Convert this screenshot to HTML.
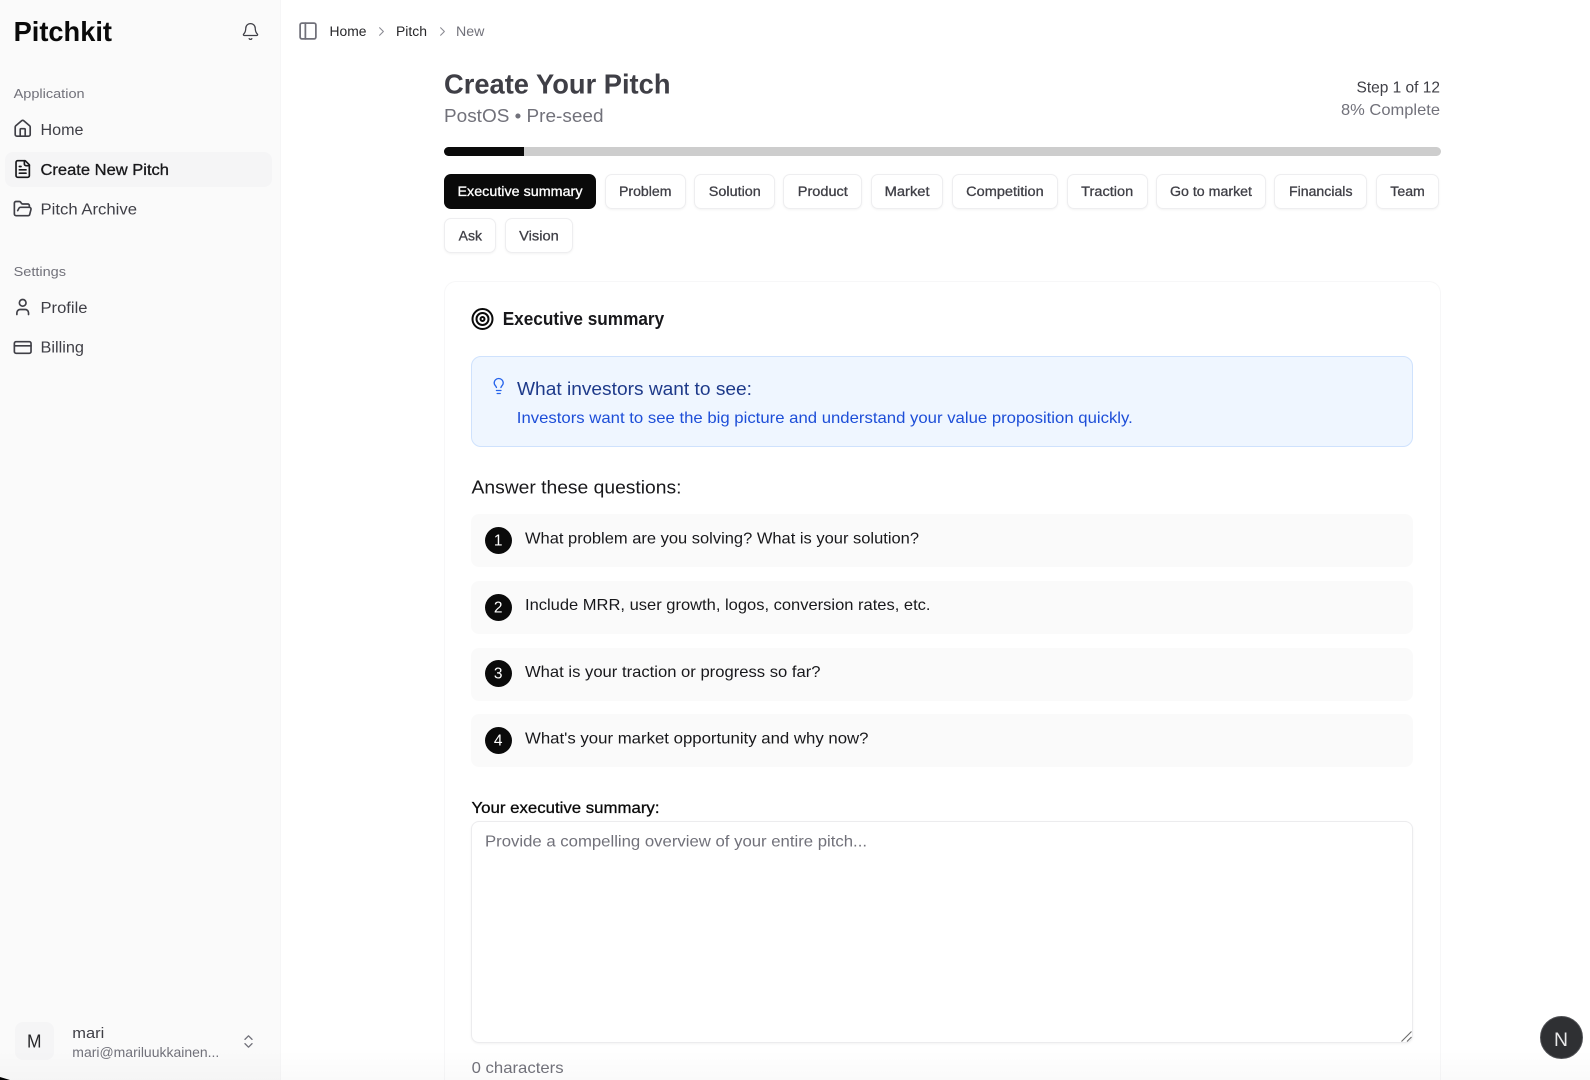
<!DOCTYPE html>
<html lang="en">
<head>
<meta charset="utf-8">
<title>Pitchkit</title>
<style>
html,body{margin:0;padding:0;background:#fff;width:1590px;height:1080px;overflow:hidden}
#page{width:1590px;height:1080px;overflow:hidden;position:relative;font-family:"Liberation Sans",sans-serif}
.b{position:absolute;box-sizing:border-box}
.tab{background:#fff;border:1px solid #eeeef0;border-radius:7px;box-shadow:0 1px 2px rgba(0,0,0,.05);top:174px;height:35px}
.q{background:#fafafa;border-radius:8px;left:471px;width:942px;height:53px}
.c{background:#0a0a0a;border-radius:50%;left:485px;width:27px;height:27px}
svg.o{position:absolute;left:0;top:0;display:block}
svg text{font-family:"Liberation Sans",sans-serif}
.m{stroke-width:.3px;paint-order:stroke}
.i{fill:none;stroke-linecap:round;stroke-linejoin:round;stroke-width:2}
</style>
</head>
<body>
<div id="page">
<div class="b" style="left:0;top:0;width:281px;height:1080px;background:#fafafa;border-right:1px solid #f6f6f7"></div>
<div class="b" style="left:5px;top:152px;width:267px;height:35px;background:#f5f5f6;border-radius:8px"></div>
<div class="b" style="left:15px;top:1022px;width:39px;height:38px;background:#f5f5f6;border-radius:8px"></div>

<div class="b" style="left:444px;top:147px;width:997px;height:9px;background:#cdcdcd;border-radius:5px"></div>
<div class="b" style="left:444px;top:147px;width:80px;height:9px;background:#0a0a0a;border-radius:5px 0 0 5px"></div>

<div class="b" style="left:444px;top:174px;width:151.5px;height:35px;background:#0a0a0a;border-radius:7px"></div>
<div class="b tab" style="left:605px;width:80.5px"></div>
<div class="b tab" style="left:694.3px;width:80.5px"></div>
<div class="b tab" style="left:783px;width:78.5px"></div>
<div class="b tab" style="left:871px;width:72px"></div>
<div class="b tab" style="left:952px;width:105.5px"></div>
<div class="b tab" style="left:1067px;width:80.5px"></div>
<div class="b tab" style="left:1156px;width:110px"></div>
<div class="b tab" style="left:1274px;width:92.5px"></div>
<div class="b tab" style="left:1376px;width:63px"></div>
<div class="b tab" style="left:444px;top:218px;width:52px"></div>
<div class="b tab" style="left:505px;top:218px;width:68px"></div>

<div class="b" style="left:444px;top:281px;width:996.5px;height:799px;background:#fff;border:1px solid #f7f7f8;border-bottom:0;border-radius:12px 12px 0 0"></div>
<div class="b" style="left:471px;top:356px;width:942px;height:91px;background:#eff6ff;border:1px solid #cfe2fd;border-radius:10px"></div>
<div class="b q" style="top:514px"></div>
<div class="b q" style="top:581px"></div>
<div class="b q" style="top:647.5px"></div>
<div class="b q" style="top:714px"></div>
<div class="b c" style="top:527px"></div>
<div class="b c" style="top:594px"></div>
<div class="b c" style="top:660px"></div>
<div class="b c" style="top:727px"></div>
<div class="b" style="left:471px;top:821px;width:942px;height:222px;background:#fff;border:1px solid #ececee;border-radius:8px;box-shadow:0 1px 2px rgba(0,0,0,.05)"></div>

<div class="b" style="left:0;top:1050px;width:1590px;height:30px;background:linear-gradient(to bottom,rgba(0,0,0,0),rgba(0,0,0,.02))"></div>
<div class="b" style="left:0;top:1077px;width:10px;height:3px;background:#000;clip-path:polygon(0 0,100% 100%,0 100%)"></div>
<div class="b" style="left:1540px;top:1016px;width:43px;height:43px;background:#2f3033;border:1.5px solid #4f5054;border-radius:50%"></div>

<svg class="o" width="1590" height="1080" viewBox="0 0 1590 1080" xmlns="http://www.w3.org/2000/svg">
<!-- sidebar text -->
<text x="13.6" y="41" font-size="28" font-weight="700" fill="#0a0a0a" textLength="98.4" lengthAdjust="spacingAndGlyphs">Pitchkit</text>
<text x="13.6" y="98" font-size="13" fill="#71717a" textLength="71" lengthAdjust="spacingAndGlyphs">Application</text>
<text x="40.5" y="135" font-size="15.5" fill="#3f3f46" textLength="43" lengthAdjust="spacingAndGlyphs">Home</text>
<text x="40.5" y="175" font-size="15.5" fill="#18181b" stroke="#18181b" class="m" textLength="128.5" lengthAdjust="spacingAndGlyphs">Create New Pitch</text>
<text x="40.5" y="214.7" font-size="15.5" fill="#3f3f46" textLength="96.5" lengthAdjust="spacingAndGlyphs">Pitch Archive</text>
<text x="13.6" y="276" font-size="13" fill="#71717a" textLength="52.4" lengthAdjust="spacingAndGlyphs">Settings</text>
<text x="40.5" y="313" font-size="15.5" fill="#3f3f46" textLength="47" lengthAdjust="spacingAndGlyphs">Profile</text>
<text x="40.5" y="352.7" font-size="15.5" fill="#3f3f46" textLength="43.5" lengthAdjust="spacingAndGlyphs">Billing</text>
<text x="27" y="1047.5" font-size="18" fill="#27272a" textLength="14.5" lengthAdjust="spacingAndGlyphs">M</text>
<text x="72.3" y="1038" font-size="15" fill="#3f3f46" textLength="32" lengthAdjust="spacingAndGlyphs">mari</text>
<text x="72.3" y="1057" font-size="14" fill="#71717a" textLength="147" lengthAdjust="spacingAndGlyphs">mari@mariluukkainen...</text>

<!-- sidebar icons -->
<g class="i" stroke="#3f3f46">
<svg x="12.7" y="118.7" width="20" height="20" viewBox="0 0 24 24"><path d="M15 21v-8a1 1 0 0 0-1-1h-4a1 1 0 0 0-1 1v8"/><path d="M3 10a2 2 0 0 1 .709-1.528l7-5.999a2 2 0 0 1 2.582 0l7 5.999A2 2 0 0 1 21 10v9a2 2 0 0 1-2 2H5a2 2 0 0 1-2-2z"/></svg>
<svg x="12.7" y="159" width="20" height="20" viewBox="0 0 24 24" stroke="#18181b"><path d="M15 2H6a2 2 0 0 0-2 2v16a2 2 0 0 0 2 2h12a2 2 0 0 0 2-2V7Z"/><path d="M14 2v4a2 2 0 0 0 2 2h4"/><path d="M10 9H8"/><path d="M16 13H8"/><path d="M16 17H8"/></svg>
<svg x="12.7" y="199" width="20" height="20" viewBox="0 0 24 24"><path d="m6 14 1.5-2.9A2 2 0 0 1 9.24 10H20a2 2 0 0 1 1.94 2.5l-1.54 6a2 2 0 0 1-1.95 1.5H4a2 2 0 0 1-2-2V5a2 2 0 0 1 2-2h3.9a2 2 0 0 1 1.69.9l.81 1.2a2 2 0 0 0 1.67.9H18a2 2 0 0 1 2 2v2"/></svg>
<svg x="12.7" y="297" width="20" height="20" viewBox="0 0 24 24"><path d="M19 21v-2a4 4 0 0 0-4-4H9a4 4 0 0 0-4 4v2"/><circle cx="12" cy="7" r="4"/></svg>
<svg x="12.7" y="337.5" width="20" height="20" viewBox="0 0 24 24"><rect x="2" y="5" width="20" height="14" rx="2"/><path d="M2 10h20"/></svg>
<svg x="241" y="22" width="19" height="19" viewBox="0 0 24 24" stroke="#3f3f46" style="stroke-width:1.6"><path d="M10.268 21a2 2 0 0 0 3.464 0"/><path d="M3.262 15.326A1 1 0 0 0 4 17h16a1 1 0 0 0 .74-1.673C19.41 13.956 18 12.499 18 8A6 6 0 0 0 6 8c0 4.499-1.411 5.956-2.738 7.326"/></svg>
<svg x="240" y="1033" width="17" height="17" viewBox="0 0 24 24" stroke="#71717a" style="stroke-width:1.8"><path d="m7 15 5 5 5-5"/><path d="m7 9 5-5 5 5"/></svg>
</g>

<!-- breadcrumb -->
<g class="i">
<svg x="297.5" y="20.5" width="21" height="21" viewBox="0 0 24 24" stroke="#71717a"><rect x="3" y="3" width="18" height="18" rx="2"/><path d="M9 3v18"/></svg>
<svg x="374" y="24" width="15" height="15" viewBox="0 0 24 24" stroke="#8a8a92" style="stroke-width:1.7"><path d="m9 18 6-6-6-6"/></svg>
<svg x="435" y="24" width="15" height="15" viewBox="0 0 24 24" stroke="#8a8a92" style="stroke-width:1.7"><path d="m9 18 6-6-6-6"/></svg>
</g>
<text x="329.5" y="36" font-size="13.5" fill="#27272a" textLength="37" lengthAdjust="spacingAndGlyphs">Home</text>
<text x="396" y="36" font-size="13.5" fill="#27272a" textLength="31" lengthAdjust="spacingAndGlyphs">Pitch</text>
<text x="456" y="36" font-size="13.5" fill="#71717a" textLength="28.4" lengthAdjust="spacingAndGlyphs">New</text>

<!-- header -->
<text x="444" y="93.5" font-size="28" font-weight="700" fill="#3f3f46" textLength="226.5" lengthAdjust="spacingAndGlyphs">Create Your Pitch</text>
<text x="444" y="122" font-size="18" fill="#71717a" textLength="159.5" lengthAdjust="spacingAndGlyphs">PostOS • Pre-seed</text>
<text x="1356.5" y="92.5" font-size="16" fill="#3f3f46" textLength="83.5" lengthAdjust="spacingAndGlyphs">Step 1 of 12</text>
<text x="1341" y="115" font-size="16" fill="#71717a" textLength="99" lengthAdjust="spacingAndGlyphs">8% Complete</text>

<!-- tabs -->
<g font-size="13.5" fill="#3f3f46" stroke="#3f3f46" class="m">
<text x="457.5" y="196" fill="#fff" stroke="#fff" textLength="125" lengthAdjust="spacingAndGlyphs">Executive summary</text>
<text x="619" y="196" textLength="52.5" lengthAdjust="spacingAndGlyphs">Problem</text>
<text x="708.8" y="196" textLength="52" lengthAdjust="spacingAndGlyphs">Solution</text>
<text x="797.8" y="196" textLength="50" lengthAdjust="spacingAndGlyphs">Product</text>
<text x="884.6" y="196" textLength="45" lengthAdjust="spacingAndGlyphs">Market</text>
<text x="966.2" y="196" textLength="77.5" lengthAdjust="spacingAndGlyphs">Competition</text>
<text x="1081.2" y="196" textLength="52" lengthAdjust="spacingAndGlyphs">Traction</text>
<text x="1170" y="196" textLength="82" lengthAdjust="spacingAndGlyphs">Go to market</text>
<text x="1289" y="196" textLength="63.5" lengthAdjust="spacingAndGlyphs">Financials</text>
<text x="1390.3" y="196" textLength="34.5" lengthAdjust="spacingAndGlyphs">Team</text>
<text x="458.7" y="240.5" textLength="23.3" lengthAdjust="spacingAndGlyphs">Ask</text>
<text x="519.2" y="240.5" textLength="39.6" lengthAdjust="spacingAndGlyphs">Vision</text>
</g>

<!-- card title -->
<svg x="470.5" y="307" width="24" height="24" viewBox="0 0 24 24" class="i" stroke="#0a0a0a"><circle cx="12" cy="12" r="10"/><circle cx="12" cy="12" r="6"/><circle cx="12" cy="12" r="2"/></svg>
<text x="502.7" y="325" font-size="18" font-weight="700" fill="#18181b" textLength="161.5" lengthAdjust="spacingAndGlyphs">Executive summary</text>

<!-- investors -->
<svg x="489.7" y="377" width="18" height="18" viewBox="0 0 24 24" class="i" stroke="#2563eb" style="stroke-width:1.8"><path d="M15 14c.2-1 .7-1.7 1.5-2.5 1-.9 1.5-2.2 1.5-3.5A6 6 0 0 0 6 8c0 1 .2 2.2 1.5 3.5.7.7 1.3 1.5 1.5 2.5"/><path d="M9 18h6"/><path d="M10 22h4"/></svg>
<text x="517" y="395" font-size="18" fill="#1e3a8a" class="m" textLength="235" lengthAdjust="spacingAndGlyphs">What investors want to see:</text>
<text x="516.8" y="423" font-size="16" fill="#1d4ed8" textLength="616" lengthAdjust="spacingAndGlyphs">Investors want to see the big picture and understand your value proposition quickly.</text>

<!-- questions -->
<text x="471.5" y="493.3" font-size="18" fill="#18181b" class="m" textLength="210" lengthAdjust="spacingAndGlyphs">Answer these questions:</text>
<g font-size="15.5" fill="#fff" text-anchor="middle">
<text x="498.2" y="545.5">1</text>
<text x="498.2" y="612.5">2</text>
<text x="498.2" y="678.5">3</text>
<text x="498.2" y="745.5">4</text>
</g>
<g font-size="16" fill="#18181b">
<text x="525" y="543.3" textLength="394" lengthAdjust="spacingAndGlyphs">What problem are you solving? What is your solution?</text>
<text x="525" y="610" textLength="405.5" lengthAdjust="spacingAndGlyphs">Include MRR, user growth, logos, conversion rates, etc.</text>
<text x="525" y="677" textLength="295.5" lengthAdjust="spacingAndGlyphs">What is your traction or progress so far?</text>
<text x="525" y="743.7" textLength="343.5" lengthAdjust="spacingAndGlyphs">What's your market opportunity and why now?</text>
</g>

<!-- textarea -->
<text x="471.5" y="813" font-size="16" fill="#0a0a0a" stroke="#0a0a0a" class="m" textLength="188" lengthAdjust="spacingAndGlyphs">Your executive summary:</text>
<text x="485" y="846.3" font-size="16" fill="#71717a" textLength="382" lengthAdjust="spacingAndGlyphs">Provide a compelling overview of your entire pitch...</text>
<path d="M1401.5 1041.5 L1411.5 1031.5 M1407 1041.5 L1411.5 1037" stroke="#6b6b6b" stroke-width="1.1" fill="none"/>
<text x="471.6" y="1073" font-size="16" fill="#71717a" textLength="92" lengthAdjust="spacingAndGlyphs">0 characters</text>

<text x="1554" y="1046" font-size="19" fill="#e9e9ea" textLength="14" lengthAdjust="spacingAndGlyphs">N</text>
</svg>
</div>
</body>
</html>
